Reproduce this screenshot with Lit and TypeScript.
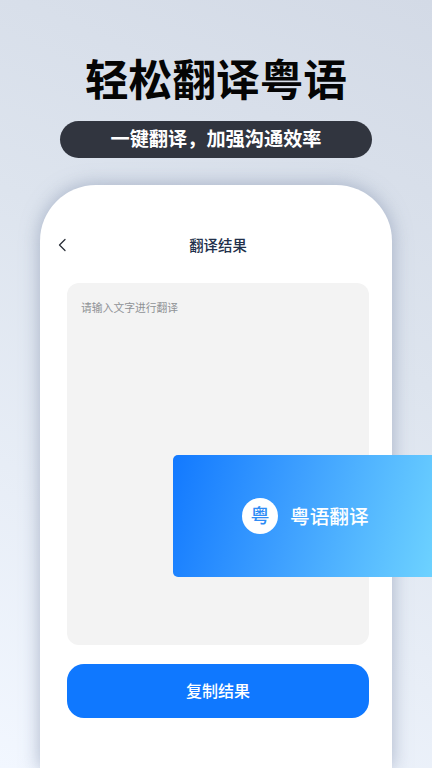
import { LitElement, html, css } from "lit";
import { customElement } from "lit/decorators.js";

@customElement("app-root")
export class AppRoot extends LitElement {
  static styles = css`
    :host {
      display: block;
      width: 432px;
      height: 768px;
      overflow: hidden;
      position: relative;
      font-family: "Noto Sans CJK SC", sans-serif;
      background: linear-gradient(205deg, #d3dae6 0%, #dde4ee 40%, #f2f7ff 100%);
    }
    .page {
      height: 768px;
      display: flex;
      flex-direction: column;
      align-items: center;
      overflow: hidden;
    }
    h1 {
      margin: 44px 0 0;
      height: 66px;
      line-height: 66px;
      font-size: 43.7px;
      font-weight: 700;
      color: #050505;
      white-space: nowrap;
    }
    .pill {
      margin-top: 11px;
      width: 312px;
      height: 37px;
      flex: none;
      border-radius: 19px;
      background: #31353f;
      color: #fff;
      font-size: 19.2px;
      font-weight: 700;
      padding-bottom: 3px;
      box-sizing: border-box;
      display: flex;
      align-items: center;
      justify-content: center;
      white-space: nowrap;
    }
    .phone {
      margin-top: 27px;
      width: 352px;
      flex: 1;
      box-sizing: border-box;
      background: #fff;
      border-radius: 56px 56px 0 0;
      box-shadow: 0 0 18px 1px rgba(125, 140, 170, 0.55);
      padding: 0 23px 0 27px;
      display: flex;
      flex-direction: column;
    }
    .bar {
      height: 98px;
      flex: none;
      position: relative;
      display: flex;
      align-items: center;
      justify-content: center;
      padding-top: 20px;
      box-sizing: border-box;
      font-size: 14.4px;
      font-weight: 500;
      color: #22304a;
    }
    .back {
      position: absolute;
      left: -11px;
      top: 52px;
      width: 12px;
      height: 16px;
    }
    .input {
      height: 362px;
      flex: none;
      background: #f3f3f3;
      border-radius: 12px;
      padding: 15px 14px;
      box-sizing: border-box;
      font-size: 10.8px;
      line-height: 18px;
      color: #8f9296;
    }
    .btn {
      margin-top: 19px;
      height: 54px;
      flex: none;
      border-radius: 17px;
      background: #0f78ff;
      color: #fff;
      font-size: 16px;
      font-weight: 500;
      padding-bottom: 2px;
      box-sizing: border-box;
      display: flex;
      align-items: center;
      justify-content: center;
    }
    .float {
      position: absolute;
      left: 173px;
      top: 455px;
      width: 259px;
      height: 122px;
      border-radius: 5px 0 0 5px;
      background: linear-gradient(105deg, #1279ff 0%, #3d9fff 45%, #6dd2ff 100%);
      display: flex;
      align-items: center;
      gap: 12px;
      padding-left: 69px;
      box-sizing: border-box;
      color: #fff;
      font-size: 19.7px;
      font-weight: 500;
      white-space: nowrap;
    }
    .label {
      margin-bottom: 2px;
    }
    .badge {
      width: 36px;
      height: 36px;
      border-radius: 50%;
      background: #fff;
      color: #2f8cf5;
      font-size: 19px;
      line-height: 34px;
      text-align: center;
      font-weight: 500;
      flex: none;
    }
  `;

  render() {
    return html`
      <div class="page">
        <h1>轻松翻译粤语</h1>
        <div class="pill">一键翻译，加强沟通效率</div>
        <div class="phone">
          <div class="bar">
            <svg class="back" viewBox="0 0 12 16" fill="none" stroke="#2a2f38" stroke-width="1.3" stroke-linecap="round" stroke-linejoin="round">
              <path d="M9 2.5 L3.5 8 L9 13.5" />
            </svg>
            翻译结果
          </div>
          <div class="input">请输入文字进行翻译</div>
          <div class="btn">复制结果</div>
        </div>
      </div>
      <div class="float">
        <span class="badge">粤</span>
        <span class="label">粤语翻译</span>
      </div>
    `;
  }
}
